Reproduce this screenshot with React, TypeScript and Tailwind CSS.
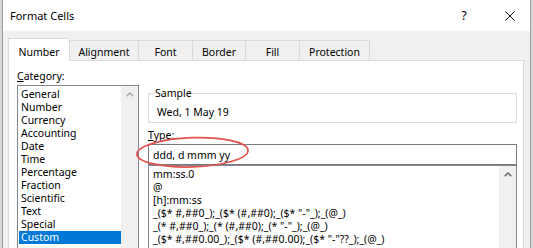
import React from 'react';

const categories = [
  'General',
  'Number',
  'Currency',
  'Accounting',
  'Date',
  'Time',
  'Percentage',
  'Fraction',
  'Scientific',
  'Text',
  'Special',
  'Custom',
];

const formats = [
  'mm:ss.0',
  '@',
  '[h]:mm:ss',
  '_($* #,##0_);_($* (#,##0);_($* "-"_);_(@_)',
  '_(* #,##0_);_(* (#,##0);_(* "-"_);_(@_)',
  '_($* #,##0.00_);_($* (#,##0.00);_($* "-"??_);_(@_)',
  '_(* #,##0.00_);_(* (#,##0.00);_(* "-"??_);_(@_)',
];

const tabs = [
  { label: 'Number', w: 'w-[61px]' },
  { label: 'Alignment', w: 'w-[69px]' },
  { label: 'Font', w: 'w-[54px]' },
  { label: 'Border', w: 'w-[53px]' },
  { label: 'Fill', w: 'w-[54px]' },
  { label: 'Protection', w: 'w-[71px]' },
];

function ArrowUp({ color }: { color: string }) {
  return (
    <svg width="8" height="5" viewBox="0 0 8 5" className="block">
      <path d="M0.7 4.3 L4 1 L7.3 4.3" fill="none" stroke={color} strokeWidth="1.4" />
    </svg>
  );
}

export default function App() {
  return (
    <div className="relative w-[533px] h-[248px] overflow-hidden bg-[#d6d6d6] font-['Segoe_UI','Noto_Sans',sans-serif] text-[10.5px] leading-4 text-black">
      <div className="ml-[2px] w-[529px] h-full border-x border-[#9b9b9b] bg-[#f0f0f0] flex flex-col">
        {/* title bar */}
        <div className="h-[31px] shrink-0 bg-white flex items-center pl-[7px] pr-[15px]">
          <span className="text-[11px]">Format Cells</span>
          <span className="ml-auto w-[10px] text-center text-[12px]">?</span>
          <svg width="10" height="10" viewBox="0 0 10 10" className="ml-[36px] block">
            <path d="M0.5 0.5 L9.5 9.5 M9.5 0.5 L0.5 9.5" stroke="#111" strokeWidth="1" />
          </svg>
        </div>

        {/* tabs */}
        <div className="h-[29px] shrink-0 flex items-end pl-[5px]">
          {tabs.map((t, i) =>
            i === 0 ? (
              <div
                key={t.label}
                className={`${t.w} relative z-10 -mb-px h-[23px] bg-white border-l border-t border-[#d9d9d9] pt-[5px] text-center`}
              >
                {t.label}
              </div>
            ) : (
              <div
                key={t.label}
                className={`${t.w} h-[20px] border-l border-t border-[#d9d9d9] pt-[3px] text-center ${i === tabs.length - 1 ? 'border-r' : ''}`}
              >
                {t.label}
              </div>
            )
          )}
        </div>

        {/* tab panel */}
        <div className="ml-[5px] w-[516px] h-[220px] shrink-0 border border-[#d9d9d9] bg-white flex items-start pt-[7px] pl-[8px] pr-[6px]">
          <div className="w-[122px] shrink-0">
            <div>
              <span className="underline">C</span>ategory:
            </div>
            <div className="mt-[1px] h-[190px] border border-[#828790] flex">
              <div className="flex-1 pt-[2px]">
                {categories.map((c) => (
                  <div
                    key={c}
                    className={`ml-[1px] h-[13px] leading-[13px] pl-[2px] ${c === 'Custom' ? 'bg-[#0078d7] text-white' : ''}`}
                  >
                    {c}
                  </div>
                ))}
              </div>
              <div className="w-[17px] bg-[#f0f0f0]">
                <div className="h-[17px] flex items-center justify-center">
                  <ArrowUp color="#a6a6a6" />
                </div>
              </div>
            </div>
          </div>

          <div className="ml-[9px] mt-[17px] w-[369px] shrink-0">
            <fieldset className="border border-[#dcdcdc] pl-[6px] pb-[2px]">
              <legend className="leading-4">Sample</legend>
              <div className="pt-[3px] pl-[2px]">Wed, 1 May 19</div>
            </fieldset>
            <div className="mt-[4px]">
              <span className="underline">T</span>ype:
            </div>
            <div className="mt-[1px] h-[21px] border border-[#7a7a7a] pl-[4px] flex items-center">
              ddd, d mmm yy
            </div>
            <div className="h-[120px] border border-[#828790] flex">
              <div className="flex-1 pt-[2px] pl-[4px] overflow-hidden whitespace-nowrap">
                {formats.map((f) => (
                  <div key={f} className="h-[13px] leading-[13px]">
                    {f}
                  </div>
                ))}
              </div>
              <div className="w-[17px] bg-[#f0f0f0]">
                <div className="h-[17px] flex items-center justify-center">
                  <ArrowUp color="#606060" />
                </div>
              </div>
            </div>
          </div>
        </div>
      </div>

      {/* red annotation ellipse */}
      <svg
        width="118"
        height="36"
        viewBox="0 0 118 36"
        className="absolute left-[135px] top-[135px] pointer-events-none"
      >
        <ellipse
          cx="57.5"
          cy="17.3"
          rx="55.5"
          ry="14.6"
          transform="rotate(-2 57.5 17.3)"
          fill="none"
          stroke="#e0534f"
          strokeWidth="1.8"
        />
      </svg>
    </div>
  );
}
